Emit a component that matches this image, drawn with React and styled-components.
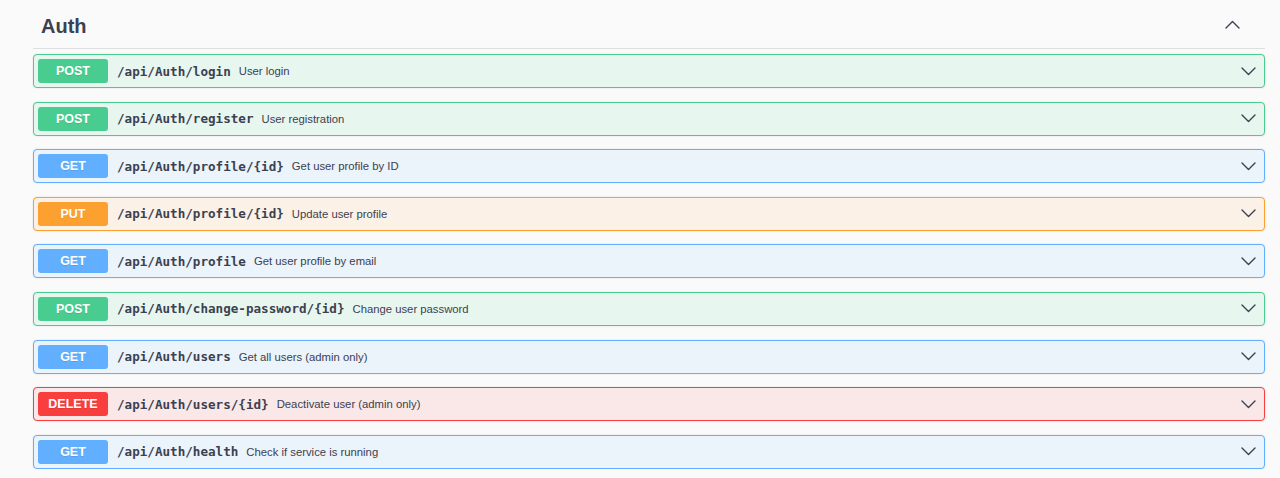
import styled, { createGlobalStyle } from "styled-components"

const COLORS = {
    POST: { main: "#49cc90", bg: "#e8f6f0" },
    GET: { main: "#61affe", bg: "#ebf3fb" },
    PUT: { main: "#fca130", bg: "#fbf1e6" },
    DELETE: { main: "#f93e3e", bg: "#fae7e7" },
}

const ROTAS = [
    { metodo: "POST", caminho: "/api/Auth/login", descricao: "User login" },
    { metodo: "POST", caminho: "/api/Auth/register", descricao: "User registration" },
    { metodo: "GET", caminho: "/api/Auth/profile/{id}", descricao: "Get user profile by ID" },
    { metodo: "PUT", caminho: "/api/Auth/profile/{id}", descricao: "Update user profile" },
    { metodo: "GET", caminho: "/api/Auth/profile", descricao: "Get user profile by email" },
    { metodo: "POST", caminho: "/api/Auth/change-password/{id}", descricao: "Change user password" },
    { metodo: "GET", caminho: "/api/Auth/users", descricao: "Get all users (admin only)" },
    { metodo: "DELETE", caminho: "/api/Auth/users/{id}", descricao: "Deactivate user (admin only)" },
    { metodo: "GET", caminho: "/api/Auth/health", descricao: "Check if service is running" },
]

const Global = createGlobalStyle`
    html, body {
        margin: 0;
        padding: 0;
        background: #fafafa;
        font-family: "Liberation Sans", Arial, sans-serif;
        color: #3b4151;
    }
`

function Seta({ up }) {
    return (
        <svg width="15" height="9" viewBox="0 0 15 9" fill="none">
            <path
                d={up ? "M1 8 L7.5 1.5 L14 8" : "M1 1 L7.5 7.5 L14 1"}
                stroke="#3b4151"
                strokeWidth="1.4"
                strokeLinecap="round"
                strokeLinejoin="round"
            />
        </svg>
    )
}

export default function App() {
    return (
        <>
            <Global />
            <Secao>
                <Cabecalho>
                    <Titulo>Auth</Titulo>
                    <Seta up />
                </Cabecalho>
                <Lista>
                    {ROTAS.map((rota, index) => (
                        <Bloco key={index} metodo={rota.metodo}>
                            <Metodo metodo={rota.metodo}>{rota.metodo}</Metodo>
                            <Caminho>{rota.caminho}</Caminho>
                            <Descricao>{rota.descricao}</Descricao>
                            <Chevron>
                                <Seta />
                            </Chevron>
                        </Bloco>
                    ))}
                </Lista>
            </Secao>
        </>
    )
}

const Secao = styled.div`
    width: 1232px;
    margin-left: 33px;
`
const Cabecalho = styled.div`
    display: flex;
    align-items: center;
    justify-content: space-between;
    height: 49px;
    padding: 0 25px 0 8px;
    border-bottom: 1px solid #dedfe1;
    box-sizing: border-box;
`
const Titulo = styled.h3`
    margin: 5px 0 0;
    font-size: 20px;
    font-weight: 700;
    color: #3b4151;
`
const Lista = styled.div`
    display: flex;
    flex-direction: column;
    gap: 13.6px;
    padding-top: 5px;
`
const Bloco = styled.div`
    display: flex;
    align-items: center;
    height: 34px;
    box-sizing: border-box;
    padding: 0 4px;
    border: 1px solid ${props => COLORS[props.metodo].main};
    border-radius: 4px;
    background-color: ${props => COLORS[props.metodo].bg};
    box-shadow: 0 0 2px rgba(0, 0, 0, 0.12);
`
const Metodo = styled.span`
    display: flex;
    align-items: center;
    justify-content: center;
    width: 70px;
    height: 24px;
    border-radius: 3px;
    background-color: ${props => COLORS[props.metodo].main};
    color: #ffffff;
    font-size: 12.5px;
    font-weight: 700;
    text-shadow: 0 1px 0 rgba(0, 0, 0, 0.1);
`
const Caminho = styled.span`
    margin-left: 9px;
    font-family: "DejaVu Sans Mono", monospace;
    font-size: 12.6px;
    font-weight: 700;
    color: #3b4151;
`
const Descricao = styled.span`
    margin-left: 8px;
    font-size: 11.3px;
    color: #3b4151;
`
const Chevron = styled.span`
    display: flex;
    margin-left: auto;
    margin-right: 4px;
`
